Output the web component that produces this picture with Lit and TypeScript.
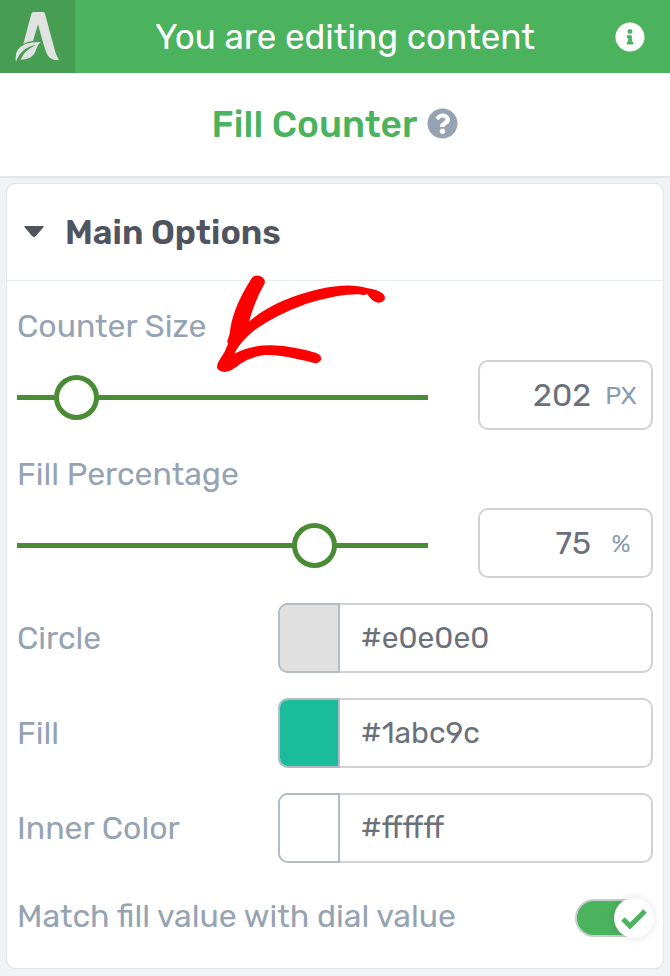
import { LitElement, html, css } from "lit";
import { customElement, property, state } from "lit/decorators.js";

const fontStack = css`Rubik, Roboto, "Liberation Sans", sans-serif`;

@customElement("range-field")
class RangeField extends LitElement {
  @property() label = "";
  @property() unit = "";
  @property({ type: Number }) max = 100;
  @property({ type: Number }) value = 0;

  static styles = css`
    :host { display: block; }
    .label { display: block; height: 38px; line-height: 38px; margin-bottom: 15px; font-size: 32px; color: #95a3b3; }
    .row { display: flex; align-items: center; gap: 50px; }
    .slider {
      appearance: none; flex: 1; min-width: 0; height: 44px; margin: 5px 0 0; background: transparent; cursor: pointer;
    }
    .slider::-webkit-slider-runnable-track { height: 5px; background: #4a8b35; }
    .slider::-webkit-slider-thumb {
      appearance: none; box-sizing: border-box; width: 45px; height: 45px; margin-top: -20px;
      border: 5px solid #4a8b35; border-radius: 50%; background: #fff;
    }
    .box {
      box-sizing: border-box; display: flex; align-items: center; width: 175px; height: 70px;
      border: 2px solid #d0d2d4; border-radius: 10px; background: #fff;
    }
    .number {
      flex: 1; min-width: 0; padding: 0; border: 0; outline: 0; background: transparent; text-align: right;
      font-family: ${fontStack}; font-size: 32px; color: #6a717b;
    }
    .unit { width: 60px; text-align: center; font-size: 25px; color: #8b9bae; }
  `;

  private update_(e: Event) {
    this.value = Number((e.target as HTMLInputElement).value);
  }

  render() {
    return html`
      <label class="label" for="slider">${this.label}</label>
      <div class="row">
        <input class="slider" id="slider" type="range" min="0" max=${this.max} .value=${String(this.value)} @input=${this.update_} />
        <div class="box">
          <input class="number" type="text" inputmode="numeric" aria-label="${this.label} value" .value=${String(this.value)} @change=${this.update_} />
          <span class="unit">${this.unit}</span>
        </div>
      </div>
    `;
  }
}

@customElement("color-field")
class ColorField extends LitElement {
  @property() label = "";
  @property() value = "#ffffff";

  static styles = css`
    :host { display: flex; align-items: center; justify-content: space-between; }
    .label { font-size: 32px; line-height: 38px; color: #95a3b3; }
    .box {
      box-sizing: border-box; display: flex; width: 59%; height: 70px;
      border: 2px solid #d0d2d4; border-radius: 10px; background: #fff;
    }
    .swatch {
      appearance: none; box-sizing: border-box; flex: none; width: 62px; height: 70px; margin: -2px 0 -2px -2px; padding: 0;
      border: 2px solid #b3bbc5; border-radius: 10px 0 0 10px; background: transparent; overflow: hidden; cursor: pointer;
    }
    .swatch::-webkit-color-swatch-wrapper { padding: 0; }
    .swatch::-webkit-color-swatch { border: 0; border-radius: 0; }
    .hex {
      flex: 1; min-width: 0; padding: 0 21px; border: 0; outline: 0; background: transparent;
      font-family: ${fontStack}; font-size: 30px; color: #6a717b;
    }
  `;

  private update_(e: Event) {
    this.value = (e.target as HTMLInputElement).value;
  }

  render() {
    return html`
      <label class="label" for="hex">${this.label}</label>
      <div class="box">
        <input class="swatch" type="color" aria-label="${this.label} color" .value=${this.value} @input=${this.update_} />
        <input class="hex" id="hex" type="text" .value=${this.value} @change=${this.update_} />
      </div>
    `;
  }
}

@customElement("app-root")
class AppRoot extends LitElement {
  @state() private open = true;

  static styles = css`
    :host { display: block; min-height: 100vh; background: #f0f3f3; font-family: ${fontStack}; }
    button { font-family: inherit; border: 0; background: transparent; padding: 0; cursor: pointer; }
    svg { display: block; }
    .bar { display: flex; align-items: center; height: 73px; background: #4bb35e; color: #fff; }
    .brand { display: flex; align-items: center; justify-content: center; width: 75px; height: 73px; background: #479e53; }
    .status { flex: 1; text-align: center; font-size: 35px; line-height: 44px; }
    .info { margin-right: 25px; }
    .heading {
      box-sizing: border-box; display: flex; align-items: center; justify-content: center; gap: 10px;
      height: 105px; padding-bottom: 2px; background: #fff; border-bottom: 2px solid #e2e6e6;
    }
    .name { margin: 0; font-size: 37px; line-height: 44px; font-weight: 500; color: #4bb35e; }
    .card { position: relative; margin: 5px 6px 7px; border: 1px solid #e2e6e6; border-radius: 10px; background: #fff; box-shadow: 0 0 1px #dfe3e3; }
    .toggle-head {
      display: flex; align-items: center; gap: 21px; width: 100%; height: 97px; padding: 0 17px;
      border-bottom: 1px solid #e6ebeb; font-size: 34px; font-weight: 600; color: #50545f;
    }
    .fields { display: flex; flex-direction: column; gap: 25px; padding: 26px 10px 24px; }
    .switch-row { display: flex; align-items: center; justify-content: space-between; height: 56px; font-size: 32px; color: #95a3b3; }
    .switch {
      appearance: none; box-sizing: border-box; display: flex; align-items: center; justify-content: flex-end;
      width: 78px; height: 38px; margin: 4px 0 0; border: 2px solid #c5cfca; border-radius: 19px; background: #4bb35e; cursor: pointer;
    }
    .switch::before {
      content: ""; flex: none; width: 40px; height: 40px; margin-right: -3px; border-radius: 50%;
      background: #fff; box-shadow: 0 0 10px #0000001f;
    }
    .switch-wrap { position: relative; }
    .tick { position: absolute; right: 6px; top: 14px; pointer-events: none; }
    .switch:not(:checked) { justify-content: flex-start; background: #cfd5d8; }
    .switch:not(:checked) + .tick { display: none; }
    .arrow { position: absolute; left: 206px; top: 89px; pointer-events: none; }
  `;

  render() {
    return html`
      <header class="bar">
        <div class="brand">
          <svg width="46" height="52" viewBox="44 30 138 156" role="img" aria-label="Thrive Architect">
            <path fill="#e0e2e1" d="M99 33h30q4 0 5 5l29 108q4 17 13 31q-22 2-33-13q-6-9-12-30l-18-64l-15 50q-15 0-29 9l24-91q2-5 6-5z" />
            <path fill="#e0e2e1" d="M122 123Q112 130 107 147Q98 177 61 176Q70 150 106 132Q62 140 47 182Q40 145 74 130Q90 123 122 123z" />
          </svg>
        </div>
        <div class="status">You are editing content</div>
        <button class="info" aria-label="Information">
          <svg width="30" height="30" viewBox="0 0 512 512" fill="#fff">
            <path d="M256 8C119.043 8 8 119.083 8 256c0 136.997 111.043 248 248 248s248-111.003 248-248C504 119.083 392.957 8 256 8zm0 110c23.196 0 42 18.804 42 42s-18.804 42-42 42-42-18.804-42-42 18.804-42 42-42zm56 254c0 6.627-5.373 12-12 12h-88c-6.627 0-12-5.373-12-12v-24c0-6.627 5.373-12 12-12h12v-64h-12c-6.627 0-12-5.373-12-12v-24c0-6.627 5.373-12 12-12h64c6.627 0 12 5.373 12 12v100h12c6.627 0 12 5.373 12 12v24z" />
          </svg>
        </button>
      </header>
      <div class="heading">
        <h1 class="name">Fill Counter</h1>
        <button aria-label="Help">
          <svg width="31" height="31" viewBox="0 0 512 512" fill="#95a3b3">
            <path d="M504 256c0 136.997-111.043 248-248 248S8 392.997 8 256C8 119.083 119.043 8 256 8s248 111.083 248 248zM262.655 90c-54.497 0-89.255 22.957-116.549 63.758-3.536 5.286-2.353 12.415 2.715 16.258l34.699 26.31c5.205 3.947 12.621 3.008 16.665-2.122 17.864-22.658 30.113-35.797 57.303-35.797 20.429 0 45.698 13.148 45.698 32.958 0 14.976-12.363 22.667-32.534 33.976C247.128 238.528 216 254.941 216 296v4c0 6.627 5.373 12 12 12h56c6.627 0 12-5.373 12-12v-1.333c0-28.462 83.186-29.647 83.186-106.667 0-58.002-60.165-102-116.531-102zM256 338c-25.365 0-46 20.635-46 46 0 25.364 20.635 46 46 46s46-20.636 46-46c0-25.365-20.635-46-46-46z" />
          </svg>
        </button>
      </div>
      <section class="card">
        <button class="toggle-head" aria-expanded=${this.open ? "true" : "false"} @click=${() => (this.open = !this.open)}>
          <svg width="20" height="12" viewBox="0 0 20 12" fill="#50545f"><path d="M1 0h18q1 0 .6 1l-7.6 9q-2 2-4 0l-7.6-9q-.4-1 .6-1z" /></svg>
          <span>Main Options</span>
        </button>
        ${this.open
          ? html`
              <div class="fields">
                <range-field label="Counter Size" unit="PX" max="2000" value="202"></range-field>
                <range-field label="Fill Percentage" unit="%" max="100" value="75"></range-field>
                <color-field label="Circle" value="#e0e0e0"></color-field>
                <color-field label="Fill" value="#1abc9c"></color-field>
                <color-field label="Inner Color" value="#ffffff"></color-field>
                <div class="switch-row">
                  <label for="match">Match fill value with dial value</label>
                  <div class="switch-wrap">
                    <input class="switch" id="match" type="checkbox" role="switch" checked />
                    <svg class="tick" width="26" height="20" viewBox="0 0 26 20" fill="none" stroke="#4bb35e" stroke-width="5"><path d="M2 10l7 7L24 2" /></svg>
                  </div>
                </div>
              </div>
              <svg class="arrow" width="177" height="103" viewBox="640 310 531 309" fill="#f00" aria-hidden="true">
                <path d="M757 324Q771 312 787 322Q800 331 794 343Q766 391 748 456Q791 418 850 393Q972 345 1058 348Q1082 349 1105 356Q1130 359 1150 372Q1159 381 1154 391Q1145 402 1130 398Q1116 393 1102 373Q1095 379 1079 374Q1022 372 920 402Q822 438 764 482Q720 518 704 552Q752 526 817 527Q885 530 950 550Q965 556 965 568Q961 580 946 581Q925 574 888 567Q835 554 793 556Q751 562 721 583Q696 605 675 607Q658 606 653 596Q650 586 658 573Q677 548 686 521Q680 517 685 508Q691 494 692 477Q702 409 757 324Z" />
              </svg>
            `
          : ""}
      </section>
    `;
  }
}
